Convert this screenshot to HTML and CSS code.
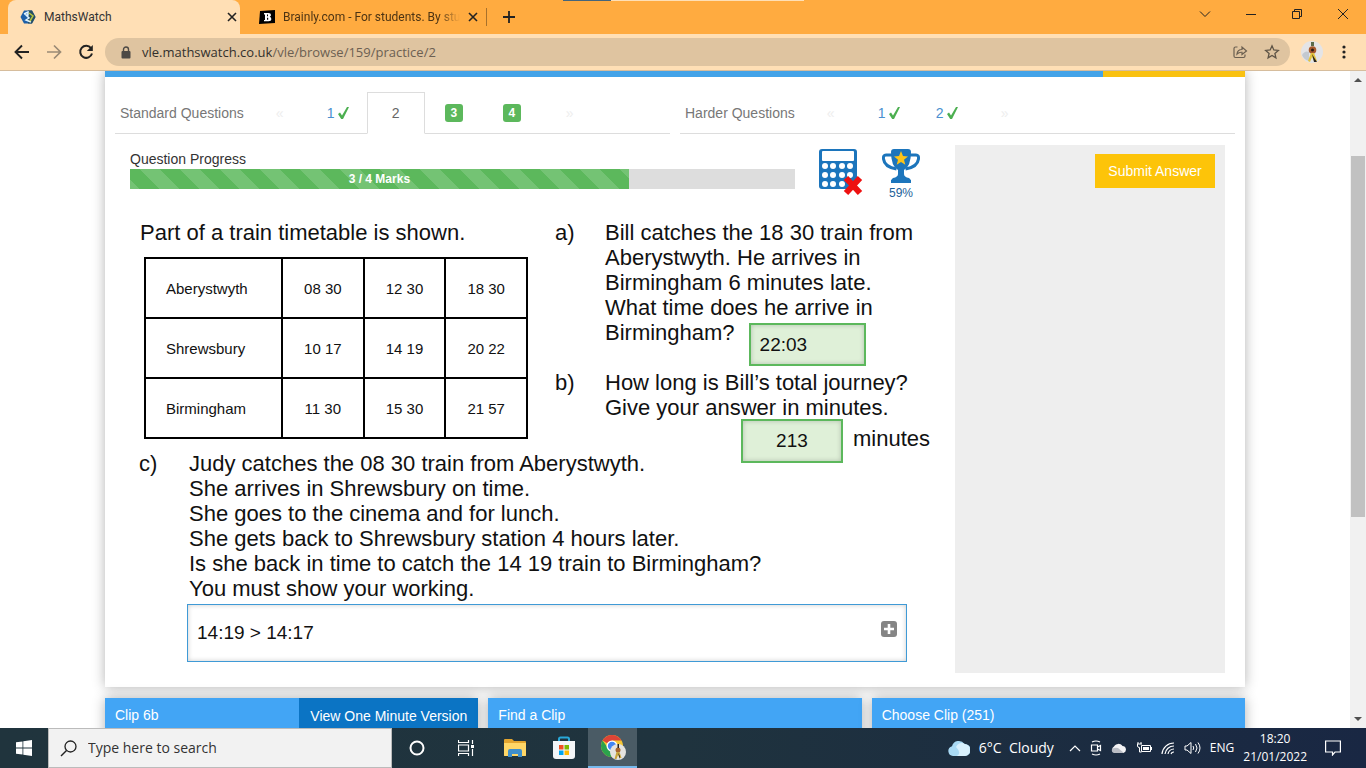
FILE: index.html
```html
<!doctype html>
<html lang="en">
<head>
  <meta charset="utf-8">
  <title>MathsWatch</title>
  <link rel="stylesheet" href="styles.css">
</head>
<body>

<header class="browser">
  <div class="tabstrip">
    <div class="tab active">
      <svg width="16" height="16" viewBox="0 0 16 16"><path d="M4 1.500h8L15.500 8 12 14.500H4L.5 8z" fill="#1c5fa8"/><path d="M8 1.500h4L15.500 8 12 14.500H8z" fill="#264e63"/><path d="M4 5l4-2v3H6l3 3-3 2 5 2" fill="none" stroke="#dff3ff" stroke-width="1.500"/><path d="M9 4l4 3-3 5" fill="none" stroke="#b5c43c" stroke-width="1.500"/></svg>
      <span class="tab-title">MathsWatch</span>
      <button class="tab-close" aria-label="Close tab"><svg width="10" height="10" viewBox="0 0 10 10"><path d="M1 1l8 8M9 1L1 9" stroke="#222" stroke-width="1.600"/></svg></button>
    </div>
    <div class="tab">
      <svg width="16" height="16" viewBox="0 0 16 16"><path d="M1 2l15-1v13L0 15z" fill="#000"/><path d="M5 4h4.500q2.500 0 2.500 2 0 1.300-1.300 1.700Q12.300 8.200 12.300 10q0 2.200-2.800 2.200H5v-1.300h1V5.400H5z" fill="#fff"/><path d="M8 5.500h1v1.700H8zM8 8.800h1.200v2H8z" fill="#000"/></svg>
      <span class="tab-title fade">Brainly.com - For students. By stu</span>
      <button class="tab-close" aria-label="Close tab"><svg width="10" height="10" viewBox="0 0 10 10"><path d="M1 1l8 8M9 1L1 9" stroke="#222" stroke-width="1.600"/></svg></button>
    </div>
    <button class="new-tab" aria-label="New tab"><svg width="12" height="12" viewBox="0 0 12 12"><path d="M6 0v12M0 6h12" stroke="#222" stroke-width="1.800"/></svg></button>
    <div class="share-strip"></div>
    <div class="window-buttons">
      <button aria-label="Search tabs"><svg width="12" height="12" viewBox="0 0 12 12"><path d="M1 3.500l5 5 5-5" fill="none" stroke="#222"/></svg></button>
      <button aria-label="Minimise"><svg width="12" height="12" viewBox="0 0 12 12"><path d="M1 6.500h10" stroke="#222"/></svg></button>
      <button aria-label="Restore"><svg width="12" height="12" viewBox="0 0 12 12"><path d="M1.500 3.500h7v7h-7zM3.500 3.500v-2h7v7h-2" fill="none" stroke="#222"/></svg></button>
      <button aria-label="Close"><svg width="12" height="12" viewBox="0 0 12 12"><path d="M1 1l10 10M11 1L1 11" stroke="#222"/></svg></button>
    </div>
  </div>
  <div class="toolbar">
    <button aria-label="Back"><svg width="16" height="16" viewBox="0 0 16 16"><path d="M15 8H2M8 1.500L1.500 8 8 14.500" fill="none" stroke="#222" stroke-width="1.900"/></svg></button>
    <button aria-label="Forward"><svg width="16" height="16" viewBox="0 0 16 16"><path d="M1 8h13M8 1.500L14.500 8 8 14.500" fill="none" stroke="#9a8a75" stroke-width="1.700"/></svg></button>
    <button aria-label="Reload"><svg width="16" height="16" viewBox="0 0 16 16"><path d="M13 4.200A6 6 0 1 0 14 9.500" fill="none" stroke="#222" stroke-width="2"/><path d="M14.800 1v6h-6z" fill="#222"/></svg></button>
    <div class="omnibox">
      <svg width="10" height="13" viewBox="0 0 10 13"><path d="M2.500 6V3.500a2.500 2.500 0 0 1 5 0V6" fill="none" stroke="#4d4945" stroke-width="1.400"/><rect x="0.500" y="5" width="9" height="7.500" rx="1" fill="#4d4945"/></svg>
      <span class="url">vle.mathswatch.co.uk<span>/vle/browse/159/practice/2</span></span>
      <button aria-label="Share"><svg width="16" height="16" viewBox="0 0 16 16"><path d="M5.500 3H3.500Q2 3 2 4.500v7.500q0 1.500 1.500 1.500h8q1.500 0 1.500-1.500v-1.500" fill="none" stroke="#6b5f50" stroke-width="1.200"/><path d="M5 10q.5-4.500 5-4.500V3l4.500 4L10 10.500V8.300Q7 8 5 10z" fill="none" stroke="#6b5f50" stroke-width="1.200"/></svg></button>
      <button aria-label="Bookmark"><svg width="16" height="16" viewBox="0 0 16 16"><path d="M8 1.800l1.800 4.200 4.500.4-3.400 3 1 4.400L8 11.500l-3.900 2.300 1-4.400-3.400-3 4.500-.4z" fill="none" stroke="#5e5446" stroke-width="1.300"/></svg></button>
    </div>
    <button aria-label="Profile"><svg width="22" height="22" viewBox="0 0 22 22"><circle cx="11" cy="11" r="11" fill="#e4e4e6"/><path d="M1 14q3-5 7-3v9Q3 19 1 14z" fill="#c3c9d0"/><path d="M10 1h3v4h-3z" fill="#5c6b4b"/><circle cx="11.500" cy="9" r="3.800" fill="#a85a2e"/><circle cx="11.500" cy="9" r="1.500" fill="#2c1c14"/><path d="M10 12h3l3 8h-3l-2-4-2 5-2-1z" fill="#e3c33d"/><path d="M11 13l3 5 2 3h-3z" fill="#272320"/></svg></button>
    <button class="menu" aria-label="Menu"><svg width="16" height="16" viewBox="0 0 16 16"><circle cx="8" cy="3" r="1.600" fill="#222"/><circle cx="8" cy="8" r="1.600" fill="#222"/><circle cx="8" cy="13" r="1.600" fill="#222"/></svg></button>
  </div>
</header>

<div class="viewport">
  <main class="page">
    <section class="practice">
      <div class="top-line"></div>

      <div class="question-nav">
        <nav>
          <span class="nav-label">Standard Questions</span>
          <a href="#" class="arrow">«</a>
          <a href="#">1 <svg width="11" height="12" viewBox="0 0 11 12"><path d="M0 7l2-1.500L4 8.500 9 0h2L5 12H3.200z" fill="#4caf50"/></svg></a>
          <a href="#" class="current">2</a>
          <a href="#"><span class="badge">3</span></a>
          <a href="#"><span class="badge">4</span></a>
          <a href="#" class="arrow">»</a>
        </nav>
        <nav>
          <span class="nav-label">Harder Questions</span>
          <a href="#" class="arrow">«</a>
          <a href="#">1 <svg width="11" height="12" viewBox="0 0 11 12"><path d="M0 7l2-1.500L4 8.500 9 0h2L5 12H3.200z" fill="#4caf50"/></svg></a>
          <a href="#">2 <svg width="11" height="12" viewBox="0 0 11 12"><path d="M0 7l2-1.500L4 8.500 9 0h2L5 12H3.200z" fill="#4caf50"/></svg></a>
          <a href="#" class="arrow">»</a>
        </nav>
      </div>

      <div class="content">
        <div class="work">
          <div class="status">
            <div class="progress">
              <div>Question Progress</div>
              <div class="bar"><div class="fill" style="width: 75%">3 / 4 Marks</div></div>
            </div>
            <svg class="calculator" width="44" height="48" viewBox="0 0 44 48">
              <rect x="0" y="1" width="38" height="40" rx="3" fill="#1c75bc"/>
              <rect x="3" y="3" width="32" height="10" rx="1" fill="#fff"/>
              <g fill="#fff">
                <circle cx="6" cy="18" r="3"/><circle cx="14" cy="18" r="3"/><circle cx="23" cy="18" r="3"/><circle cx="31" cy="18" r="3"/>
                <circle cx="6" cy="27" r="3"/><circle cx="14" cy="27" r="3"/><circle cx="23" cy="27" r="3"/><circle cx="31" cy="27" r="3"/>
                <circle cx="6" cy="36" r="3"/><circle cx="14" cy="36" r="3"/><circle cx="23" cy="36" r="3"/>
              </g>
              <path d="M27 30l14 15M41 30L27 45" stroke="#ee1111" stroke-width="6"/>
            </svg>
            <div class="trophy">
              <svg width="38" height="37" viewBox="0 0 38 37">
                <path d="M10 7H4Q1 7 1.500 11q1 8 13 10M28 7h6q3 0 2.500 4-1 8-13 10" fill="none" stroke="#1c75bc" stroke-width="3"/>
                <path d="M12 1h14q3 0 3 3 0 14-7 18v4q0 3 5 4 2 1 2 4H9q0-3 2-4 5-1 5-4v-4Q9 18 9 4q0-3 3-3z" fill="#1c75bc"/>
                <path d="M9 32h20v3H9z" fill="#1c75bc"/>
                <path d="M19 3l2 5 5 .4-4 3.300 1.300 5L19 14l-4.300 2.700 1.300-5-4-3.300 5-.4z" fill="#fcc419"/>
              </svg>
              <div>59%</div>
            </div>
          </div>

          <div class="question">
            <div class="timetable">
              <div>Part of a train timetable is shown.</div>
              <table>
                <tbody>
                  <tr><th scope="row">Aberystwyth</th><td>08 30</td><td>12 30</td><td>18 30</td></tr>
                  <tr><th scope="row">Shrewsbury</th><td>10 17</td><td>14 19</td><td>20 22</td></tr>
                  <tr><th scope="row">Birmingham</th><td>11 30</td><td>15 30</td><td>21 57</td></tr>
                </tbody>
              </table>
            </div>

            <div class="parts">
              <div class="part">
                <span>a)</span>
                <div>
                  Bill catches the 18 30 train from<br>
                  Aberystwyth. He arrives in<br>
                  Birmingham 6 minutes late.<br>
                  What time does he arrive in
                  <div class="answer-a">
                    <label for="answerA">Birmingham?</label>
                    <input type="text" id="answerA" value="22:03">
                  </div>
                </div>
              </div>
              <div class="part">
                <span>b)</span>
                <div>
                  How long is Bill’s total journey?<br>
                  Give your answer in minutes.
                  <div class="answer-b">
                    <input type="text" id="answerB" value="213">
                    <label for="answerB">minutes</label>
                  </div>
                </div>
              </div>
            </div>

            <div class="part part-c">
              <span>c)</span>
              <div>
                <label for="answerC">
                  Judy catches the 08 30 train from Aberystwyth.<br>
                  She arrives in Shrewsbury on time.<br>
                  She goes to the cinema and for lunch.<br>
                  She gets back to Shrewsbury station 4 hours later.<br>
                  Is she back in time to catch the 14 19 train to Birmingham?<br>
                  You must show your working.
                </label>
                <div class="answer-c">
                  <input type="text" id="answerC" value="14:19 &gt; 14:17">
                  <button aria-label="Add line"><svg width="16" height="16" viewBox="0 0 16 16"><rect width="16" height="16" rx="3" fill="#858585"/><path d="M8 3v10M3 8h10" stroke="#fff" stroke-width="2.600"/></svg></button>
                </div>
              </div>
            </div>
          </div>
        </div>

        <aside>
          <button class="submit">Submit Answer</button>
        </aside>
      </div>
    </section>

    <div class="clips">
      <section class="clip"><span>Clip 6b</span><button>View One Minute Version</button></section>
      <section class="clip"><span>Find a Clip</span></section>
      <section class="clip"><span>Choose Clip (251)</span></section>
    </div>
  </main>

  <div class="scrollbar">
    <svg width="16" height="17" viewBox="0 0 16 17"><path d="M4 11l4-4 4 4z" fill="#505050"/></svg>
    <div class="thumb"></div>
    <svg width="16" height="17" viewBox="0 0 16 17"><path d="M4 6l4 4 4-4z" fill="#505050"/></svg>
  </div>
</div>

<footer class="taskbar">
  <button class="start" aria-label="Start"><svg width="16" height="16" viewBox="0 0 16 16"><path d="M0 2.300L6.500 1.400v6.200H0zM7.300 1.300L16 0v7.600H7.300zM0 8.400h6.500v6.200L0 13.700zM7.300 8.400H16V16l-8.700-1.300z" fill="#fff"/></svg></button>
  <label class="search">
    <svg width="17" height="17" viewBox="0 0 17 17"><circle cx="10.500" cy="6.500" r="5.500" fill="none" stroke="#222" stroke-width="1.300"/><path d="M6.500 10.500L1 16" stroke="#222" stroke-width="1.400"/></svg>
    <input type="text" placeholder="Type here to search">
  </label>
  <div class="apps">
    <button aria-label="Cortana"><svg width="16" height="16" viewBox="0 0 16 16"><circle cx="8" cy="8" r="6.500" fill="none" stroke="#fff" stroke-width="2"/></svg></button>
    <button aria-label="Task view"><svg width="16" height="16" viewBox="0 0 16 16"><path d="M.5 0v2.500h10V0M.5 16v-2.500h10V16M.5 5h10v6H.5zM14.500 0v4M14.500 9v7" fill="none" stroke="#fff" stroke-width="1.200"/><path d="M13 5h3v3h-3z" fill="#fff"/></svg></button>
    <button aria-label="File Explorer"><svg width="22" height="20" viewBox="0 0 22 20"><path d="M0 2q0-1 1-1h7l2 2h11q1 0 1 1v14H0z" fill="#e3a52f"/><path d="M0 5h22v12q0 1-1 1H1q-1 0-1-1z" fill="#ffd767"/><path d="M4 19v-6q0-2 2-2h10q2 0 2 2v6h-4v-3H8v3z" fill="#3f8fcb"/></svg></button>
    <button aria-label="Store"><svg width="24" height="24" viewBox="0 0 24 24"><path d="M7 6V3q0-1.500 1.500-1.500h7Q17 1.500 17 3v3" fill="none" stroke="#28a8d8" stroke-width="2"/><path d="M1 5h22v15q0 3-3 3H4q-3 0-3-3z" fill="#f3f5f7"/><path d="M7 9h4.500v4.500H7z" fill="#f25022"/><path d="M12.500 9H17v4.500h-4.500z" fill="#7fba00"/><path d="M7 14.500h4.500V19H7z" fill="#00a4ef"/><path d="M12.500 14.500H17V19h-4.500z" fill="#ffb900"/></svg></button>
    <button class="running" aria-label="Chrome"><svg width="26" height="26" viewBox="0 0 26 26"><circle cx="12" cy="12" r="11" fill="#f5c634"/><path d="M12 12L2.500 6.500A11 11 0 0 1 21.500 6.500H12z" fill="#dc4437"/><path d="M12 12L8 14 2.500 6.500A11 11 0 0 0 11 23l4-7z" fill="#2ba24c"/><circle cx="12" cy="12" r="5.500" fill="#fff"/><circle cx="12" cy="12" r="4.200" fill="#4286f4"/><circle cx="18" cy="18" r="8" fill="#e5e3df"/><circle cx="18" cy="16" r="2.500" fill="#a9652f"/><path d="M16.500 18h3l2 6h-2L18 21l-1.500 4h-2z" fill="#c9a53b"/><path d="M17.500 10h1.500v4h-1.500zM18 19l2 3v3z" fill="#2a2520"/></svg></button>
  </div>
  <div class="tray">
    <svg width="22" height="16" viewBox="0 0 22 16"><path d="M5 16A5 5 0 0 1 4 6.200 7 7 0 0 1 16.500 4 6 6 0 0 1 17 16z" fill="#a9daf5"/><path d="M8 7a6 6 0 0 1 9-3q5 1 5 6t-5 6H9q5-3-1-9z" fill="#d8f0fd"/></svg>
    <span class="weather">6°C&nbsp; Cloudy</span>
    <svg width="12" height="12" viewBox="0 0 12 12"><path d="M1 9l5-5 5 5" fill="none" stroke="#fff" stroke-width="1.200"/></svg>
    <svg width="12" height="16" viewBox="0 0 12 16"><path d="M2 2q4-2 8 0M2 14q4 2 8 0M1.500 5h6v6h-6zM7.500 7l3-1.500v5l-3-1.500" fill="none" stroke="#fff" stroke-width="1.200"/></svg>
    <svg width="16" height="10" viewBox="0 0 16 10"><path d="M4 10A3.500 3.500 0 0 1 3 3.500 5 5 0 0 1 11.500 3 3.600 3.600 0 0 1 12.500 10z" fill="#f3f3f5"/><path d="M1 6q3-2 6-1l6 5H4Q0 10 1 6z" fill="#b9bcc4"/></svg>
    <svg width="16" height="12" viewBox="0 0 16 12"><path d="M5.500 3.500h9v6h-9zM1 2h5M2 0v2M5 0v2M1.500 2v2q0 1.500 2 1.500V10h2" fill="none" stroke="#fff"/><path d="M7 5h6v3H7zM15 5h1v3h-1z" fill="#fff"/></svg>
    <svg width="14" height="14" viewBox="0 0 14 14"><path d="M1 13A12 12 0 0 1 13 2M4 13a9 9 0 0 1 9-8M7 13a6 6 0 0 1 6-5M10 13a3 3 0 0 1 3-2" fill="none" stroke="#fff" stroke-width="1.200"/></svg>
    <svg width="17" height="14" viewBox="0 0 17 14"><path d="M1 5h2l4-3.500v11L3 9H1zM9 5q1.500 2 0 4M11.500 3q3 4 0 8M14 1.500q4 5.500 0 11" fill="none" stroke="#fff"/></svg>
    <span class="lang">ENG</span>
    <div class="clock">18:20<br>21/01/2022</div>
    <svg class="notify" width="16" height="16" viewBox="0 0 16 16"><path d="M.6 1h14.800v11H10l-2.500 3V12H.6z" fill="none" stroke="#fff" stroke-width="1.200"/></svg>
  </div>
</footer>

</body>
</html>
```
FILE: styles.css
```css
* {
  box-sizing: border-box;
}
body {
  margin: 0;
  height: 100vh;
  display: flex;
  flex-direction: column;
  overflow: hidden;
  font-family: "Liberation Sans", Arial, sans-serif;
  font-size: 14px;
  line-height: 20px;
  color: #333;
  background: #fff;
}
button {
  display: flex;
  align-items: center;
  justify-content: center;
  padding: 0;
  border: 0;
  background: none;
  font: inherit;
}
input {
  font: inherit;
}
a {
  text-decoration: none;
}
svg {
  flex: none;
}

/* browser */
.tabstrip {
  position: relative;
  display: flex;
  height: 34px;
  padding-left: 8px;
  background: #ffab40;
  font-family: Roboto, sans-serif;
  font-size: 12px;
}
.tab {
  display: flex;
  align-items: center;
  gap: 8px;
  width: 247px;
  height: 18px;
  margin-top: 8px;
  padding: 0 10px 0 19px;
  border-right: 1px solid #a8712b;
  color: #4d3413;
}
.tab.active {
  width: 232px;
  height: 34px;
  margin-top: 0;
  padding: 0 3px 0 12px;
  border-right: 0;
  border-radius: 8px 8px 0 0;
  background: #ffdfb5;
  color: #333;
}
.tab-title {
  flex: 1;
  white-space: nowrap;
}
.fade {
  mask-image: linear-gradient(to right, #000 88%, transparent);
}
.new-tab {
  width: 44px;
}
.share-strip {
  position: absolute;
  top: 0;
  left: 563px;
  width: 241px;
  height: 1px;
  background: linear-gradient(to right, #44657c 20%, #ffdfb5 20%);
}
.window-buttons {
  display: flex;
  margin-left: auto;
  height: 28px;
}
.window-buttons button {
  width: 46px;
}
.toolbar {
  display: flex;
  align-items: center;
  gap: 16px;
  height: 37px;
  padding: 0 14px;
  border-bottom: 1px solid #d6bd9d;
  background: #ffdfb5;
}
.menu {
  margin-left: -3px;
}
.omnibox {
  flex: 1;
  display: flex;
  align-items: center;
  gap: 16px;
  height: 28px;
  margin-left: -5px;
  margin-right: -5px;
  padding: 0 10px 0 16px;
  border-radius: 14px;
  background: #dfc4a0;
}
.url {
  flex: 1;
  margin-left: -5px;
  font-family: "Open Sans", sans-serif;
  font-size: 13px;
  color: #33302c;
}
.url span {
  color: #6c6052;
}

/* page */
.viewport {
  flex: 1;
  min-height: 0;
  display: flex;
}
.page {
  flex: 1;
  overflow: hidden;
}
.practice, .clips {
  width: 1140px;
  max-width: 100%;
  margin: 0 auto;
}
.practice {
  padding-bottom: 14px;
  background: #fff;
  box-shadow: 0 0 12px rgba(0, 0, 0, 0.3);
}
.top-line {
  height: 6px;
  background: #43a3e8;
  border-right: 142px solid #f9c110;
}
.question-nav {
  display: grid;
  grid-template-columns: 1fr 1fr;
  gap: 10px;
  padding: 15px 10px 0;
}
nav {
  display: flex;
  height: 42px;
  border-bottom: 1px solid #ddd;
  color: #777;
}
nav a, .nav-label {
  display: flex;
  align-items: center;
  justify-content: center;
  gap: 3px;
}
.nav-label {
  padding: 0 7px 0 5px;
}
nav a {
  width: 58px;
  color: #4a90d0;
}
nav .arrow {
  color: #eee;
}
nav .current {
  height: 42px;
  border: 1px solid #ddd;
  border-bottom-color: #fff;
  color: #666;
}
.badge {
  width: 18px;
  height: 18px;
  border-radius: 3px;
  background: #5cb85c;
  color: #fff;
  font-size: 12px;
  font-weight: bold;
  line-height: 18px;
  text-align: center;
}
.content {
  display: flex;
  margin-top: 11px;
  padding: 0 20px 0 25px;
}
.work {
  flex: 1;
}
.status {
  display: flex;
  height: 75px;
  padding: 3px 35px 0 0;
}
.progress {
  flex: 1;
  padding-top: 1px;
}
.bar {
  height: 20px;
  background: #ddd;
}
.fill {
  height: 20px;
  background: #5cb85c linear-gradient(45deg, rgba(255, 255, 255, 0.15) 25%, transparent 25%, transparent 50%, rgba(255, 255, 255, 0.15) 50%, rgba(255, 255, 255, 0.15) 75%, transparent 75%);
  background-position: 10px 0;
  background-size: 40px 40px;
  color: #fff;
  font-size: 12px;
  font-weight: bold;
  text-align: center;
}
.calculator {
  margin-left: 24px;
}
.trophy {
  width: 38px;
  margin-left: 19px;
  color: #1c5f99;
  font-size: 12px;
  line-height: 16px;
  text-align: center;
}
.trophy svg {
  display: block;
}
aside {
  width: 270px;
  min-height: 528px;
  padding: 9px 10px;
  background: #eee;
}
.submit {
  width: 120px;
  height: 34px;
  margin-left: auto;
  background: #fdc409;
  color: #fff;
}

/* question */
.question {
  display: grid;
  grid-template-columns: 415px 1fr;
  padding: 0 25px 0 10px;
  color: #111;
  font-size: 22px;
  line-height: 25px;
}
.timetable table {
  width: 384px;
  margin: 12px 0 0 4px;
  border-collapse: collapse;
  table-layout: fixed;
  font-size: 15px;
}
th, td {
  height: 60px;
  padding: 0;
  border: 2px solid #000;
  font-weight: normal;
  text-align: center;
}
th {
  width: 137px;
  padding-left: 20px;
  text-align: left;
}
.part {
  display: grid;
  grid-template-columns: 50px 1fr;
}
.part input {
  padding: 0 9px;
  border: 2px solid #5cb85c;
  background: #dff0d8;
  box-shadow: inset 0 0 5px rgba(0, 0, 0, 0.2);
  color: #111;
  font-size: 19px;
}
.answer-a, .answer-b {
  display: flex;
  gap: 14px;
  height: 50px;
}
.answer-a input {
  width: 117px;
  height: 43px;
  margin-top: 3px;
}
.answer-b {
  gap: 10px;
  height: 44px;
  margin-top: -1px;
  justify-content: flex-end;
}
.answer-b label {
  line-height: 40px;
}
.answer-b input {
  width: 102px;
  height: 44px;
  text-align: center;
}
.part-c {
  grid-column: 1 / -1;
  margin: -12px 0 0 -1px;
}
.answer-c {
  position: relative;
  width: 720px;
  margin: 3px 0 0 -2px;
}
.part .answer-c input {
  display: block;
  width: 100%;
  height: 58px;
  border: 1px solid #3f9ad6;
  background: #fff;
}
.answer-c button {
  position: absolute;
  top: 17px;
  right: 10px;
}

/* clips */
.clips {
  display: grid;
  grid-template-columns: 1fr 1fr 1fr;
  gap: 10px;
  margin-top: 11px;
}
.clip {
  display: flex;
  justify-content: space-between;
  height: 200px;
  background: #42a5f5;
  box-shadow: 0 0 12px rgba(0, 0, 0, 0.3);
  color: #fff;
}
.clip span {
  padding: 7px 10px;
}
.clip button {
  width: 179px;
  height: 36px;
  background: #0b74c4;
  color: #fff;
}

.scrollbar {
  display: flex;
  flex-direction: column;
  width: 16px;
  background: #f1f1f1;
}
.thumb {
  height: 55%;
  margin: 68px 1px auto;
  background: #c1c1c1;
}

/* taskbar */
.taskbar {
  display: flex;
  height: 40px;
  background: linear-gradient(to right, #20343d, #1f333e 50%, #192743);
  color: #fff;
  font-family: "Open Sans", sans-serif;
}
.start {
  width: 48px;
}
.search {
  display: flex;
  align-items: center;
  gap: 11px;
  width: 344px;
  padding: 0 11px;
  border: 1px solid #bbb;
  background: #f2f2f2;
}
.search input {
  flex: 1;
  padding: 0;
  border: 0;
  background: none;
}
.search input::placeholder {
  color: #333;
}
.apps {
  display: flex;
}
.apps button {
  width: 49px;
}
.apps .running {
  border-bottom: 2px solid #76b9ed;
  background: #4a5b65;
}
.tray {
  display: flex;
  align-items: center;
  gap: 9px;
  margin-left: auto;
  padding-right: 25px;
  font-size: 12px;
}
.weather {
  margin-right: 6px;
  font-size: 14px;
}
.clock {
  line-height: 18px;
  text-align: center;
}
.notify {
  margin-left: 9px;
}
```
